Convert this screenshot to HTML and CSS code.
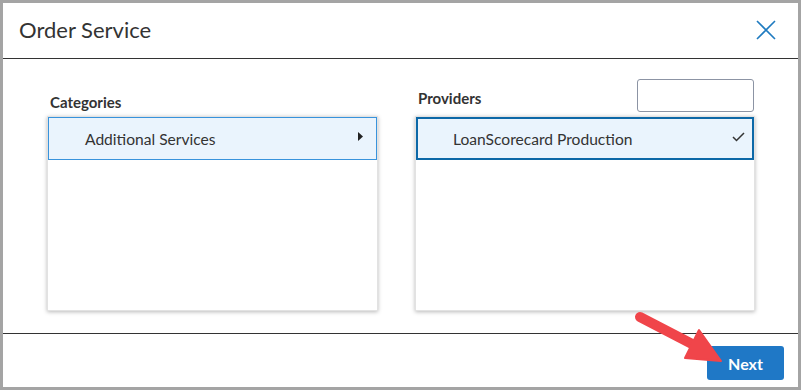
FILE: index.html
```html
<!DOCTYPE html>
<html lang="en">
<head>
    <meta charset="UTF-8">
    <title>Order Service</title>
    <link rel="stylesheet" href="styles.css">
</head>
<body>
    <div class="dialog">
        <div class="dialog-header">
            <h2 class="dialog-title">Order Service</h2>
            <button class="close-btn" type="button" aria-label="Close">
                <svg width="20" height="20" viewBox="0 0 20 20">
                    <path d="M1 1 L19 19 M19 1 L1 19" stroke="#1f7bc0" stroke-width="1.6" fill="none"/>
                </svg>
            </button>
        </div>

        <div class="dialog-body">
            <div class="column column-left">
                <div class="column-head">
                    <label class="column-label">Categories</label>
                </div>
                <div class="list-box">
                    <div class="list-item list-item-active">
                        <span>Additional Services</span>
                        <svg class="caret" width="5" height="9" viewBox="0 0 5 9">
                            <path d="M0 0 L5 4.5 L0 9 Z" fill="#222"/>
                        </svg>
                    </div>
                </div>
            </div>

            <div class="column column-right">
                <div class="column-head">
                    <label class="column-label column-label-providers">Providers</label>
                    <input class="filter-input" type="text">
                </div>
                <div class="list-box">
                    <div class="list-item list-item-selected">
                        <span>LoanScorecard Production</span>
                        <svg class="check" width="13" height="10" viewBox="0 0 13 10">
                            <path d="M1 5 L4.5 8.5 L12 1" stroke="#333" stroke-width="1.5" fill="none"/>
                        </svg>
                    </div>
                </div>
            </div>
        </div>

        <div class="dialog-footer">
            <button class="next-btn" type="button">Next</button>
        </div>

        <!-- annotation arrow drawn over the dialog -->
        <svg class="pointer-arrow" width="795" height="384" viewBox="3 3 795 384">
            <line x1="640" y1="317" x2="694" y2="345" stroke="#f0454a" stroke-width="10" stroke-linecap="round"/>
            <polygon points="699,330 685,358 721,361" fill="#f0454a" stroke="#f0454a" stroke-width="2" stroke-linejoin="round"/>
        </svg>
    </div>
</body>
</html>
```

FILE: styles.css
```css
body {
    margin: 0;
    padding: 3px;
    background-color: #a4a4a4;
    font-family: Lato, "Open Sans", Arial, sans-serif;
    color: #333;
}

.dialog {
    position: relative;
    width: 795px;
    height: 384px;
    background: #fff;
    display: flex;
    flex-direction: column;
}

.dialog-header {
    height: 55px;
    border-bottom: 1px solid #333;
    display: flex;
    align-items: center;
    justify-content: space-between;
    padding: 0 22px 0 16px;
}

.dialog-title {
    margin: 0 0 3px;
    font-size: 22px;
    font-weight: 400;
    color: #333;
}

.close-btn {
    background: none;
    border: none;
    padding: 0;
    width: 20px;
    height: 20px;
    margin-bottom: 2px;
    cursor: pointer;
}

.close-btn svg {
    display: block;
}

.dialog-body {
    flex: 1;
    display: flex;
    padding: 20px 43px 0 44px;
    gap: 37px;
}

.column-left {
    width: 331px;
}

.column-right {
    width: 340px;
}

.column-head {
    height: 37px;
    display: flex;
    align-items: flex-end;
    justify-content: space-between;
}

.column-label {
    display: block;
    font-size: 15px;
    font-weight: 700;
    line-height: 16px;
    margin: 0 0 6px 3px;
}

.column-label-providers {
    margin-bottom: 10px;
}

.filter-input {
    width: 117px;
    height: 33px;
    box-sizing: border-box;
    border: 1px solid #8c94a4;
    border-radius: 3px;
    margin: 0 1px 4px 0;
    align-self: flex-start;
}

.list-box {
    height: 195px;
    box-sizing: border-box;
    border: 1px solid #e2e2e2;
    box-shadow: 0 1px 4px rgba(0, 0, 0, 0.28);
    background: #fff;
}

.list-item {
    height: 43px;
    box-sizing: border-box;
    display: flex;
    align-items: center;
    justify-content: space-between;
    background-color: #eaf4fd;
    font-size: 15.6px;
}

.list-item-active {
    border: 1px solid #3893dc;
    padding: 0 13px 0 36px;
}

.list-item-active .caret {
    margin-top: -4px;
}

.list-item-selected {
    border: 2px solid #0c68a7;
    padding: 0 7px 0 35px;
}

.list-item-selected .check {
    margin-top: -4px;
}

.dialog-footer {
    height: 54px;
    border-top: 1px solid #333;
    display: flex;
    justify-content: flex-end;
    align-items: flex-start;
    padding: 12px 14px 0 0;
    box-sizing: border-box;
}

.next-btn {
    width: 77px;
    height: 34px;
    background-color: #1f78c6;
    color: #fff;
    border: none;
    border-radius: 3px;
    font-family: Lato, "Open Sans", Arial, sans-serif;
    font-size: 16px;
    font-weight: 700;
    cursor: pointer;
}

.pointer-arrow {
    position: absolute;
    left: 0;
    top: 0;
    pointer-events: none;
}
```
